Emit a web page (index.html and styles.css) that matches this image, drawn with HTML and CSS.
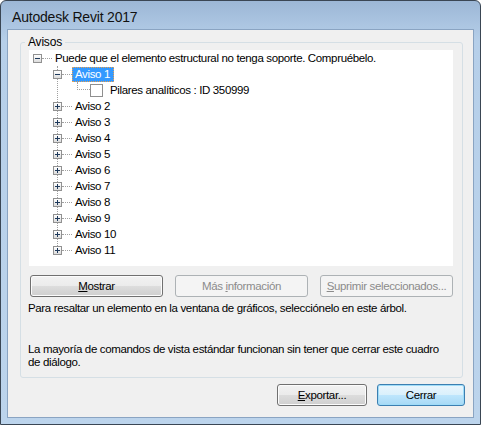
FILE: index.html
```html
<!DOCTYPE html>
<html lang="es">
<head>
  <meta charset="UTF-8">
  <title>Autodesk Revit 2017</title>
  <link rel="stylesheet" href="styles.css">
</head>
<body>
  <div class="window">
    <div class="titlebar">Autodesk Revit 2017</div>
    <div class="client">
      <fieldset class="group">
        <legend>Avisos</legend>
        <div class="tree">
          <div class="row">
            <span class="exp minus"></span><span class="dots"></span><span class="label">Puede que el elemento estructural no tenga soporte. Compruébelo.</span>
          </div>
          <ul class="branch">
            <li>
              <div class="row"><span class="exp minus"></span><span class="dots"></span><span class="label selected">Aviso 1</span></div>
              <div class="row leaf"><span class="elbow"></span><span class="check"></span><span class="label">Pilares analíticos : ID 350999</span></div>
            </li>
            <li class="row"><span class="exp"></span><span class="dots"></span><span class="label">Aviso 2</span></li>
            <li class="row"><span class="exp"></span><span class="dots"></span><span class="label">Aviso 3</span></li>
            <li class="row"><span class="exp"></span><span class="dots"></span><span class="label">Aviso 4</span></li>
            <li class="row"><span class="exp"></span><span class="dots"></span><span class="label">Aviso 5</span></li>
            <li class="row"><span class="exp"></span><span class="dots"></span><span class="label">Aviso 6</span></li>
            <li class="row"><span class="exp"></span><span class="dots"></span><span class="label">Aviso 7</span></li>
            <li class="row"><span class="exp"></span><span class="dots"></span><span class="label">Aviso 8</span></li>
            <li class="row"><span class="exp"></span><span class="dots"></span><span class="label">Aviso 9</span></li>
            <li class="row"><span class="exp"></span><span class="dots"></span><span class="label">Aviso 10</span></li>
            <li class="row last"><span class="exp"></span><span class="dots"></span><span class="label">Aviso 11</span></li>
          </ul>
        </div>

        <div class="actions">
          <button class="btn"><u>M</u>ostrar</button>
          <button class="btn" disabled>Más <u>i</u>nformación</button>
          <button class="btn" disabled><u>S</u>uprimir seleccionados...</button>
        </div>
        <p class="hint">Para resaltar un elemento en la ventana de gráficos, selecciónelo en este árbol.</p>
        <p class="note">La mayoría de comandos de vista estándar funcionan sin tener que cerrar este cuadro<br>de diálogo.</p>
      </fieldset>

      <div class="footer">
        <button class="btn export"><u>E</u>xportar...</button>
        <button class="btn default">Cerrar</button>
      </div>
    </div>
  </div>
</body>
</html>
```
FILE: styles.css
```css
/* Win7 style dialog */
body {
  margin: 0;
  background: #ffffff;
  font-family: "Liberation Sans", Arial, sans-serif;
  font-size: 11.5px;
  letter-spacing: -0.35px;
  color: #000000;
}

.window {
  width: 481px;
  height: 425px;
  box-sizing: border-box;
  border: 1px solid #3a4654;
  border-radius: 6px 6px 0 0;
  background: linear-gradient(#9cb7d6, #b6cfe9 40px, #bcd4ec);
  display: flex;
  flex-direction: column;
}

.titlebar {
  height: 28px;
  padding-left: 11px;
  line-height: 33px;
  font-size: 14px;
  letter-spacing: -0.2px;
  color: #111111;
}

.client {
  flex: 1;
  margin: 0 6px 6px 6px;
  border: 1px solid #8aa4c2;
  background: #f0f0f0;
  display: flex;
  flex-direction: column;
}

/* group box */
.group {
  margin: 5px 10px 0 12px;
  padding: 0 9px 0 8px;
  height: 343px;
  box-sizing: border-box;
  border: 1px solid #d5dfe5;
  border-radius: 3px;
}

.group legend {
  padding: 0 3px;
  margin-left: -4px;
  font-size: 12px;
  letter-spacing: -0.2px;
  line-height: 14px;
}

/* tree view */
.tree {
  height: 216px;
  margin-top: 1px;
  background: #ffffff;
  overflow: hidden;
}

.tree ul {
  list-style: none;
  margin: 0;
  padding: 0;
}

.row {
  display: flex;
  align-items: center;
  height: 16px;
  padding-left: 4px;
}

.exp {
  width: 9px;
  height: 9px;
  box-sizing: border-box;
  border: 1px solid #919191;
  background:
    linear-gradient(#1e395b, #1e395b) center / 5px 1px no-repeat,
    linear-gradient(#1e395b, #1e395b) center / 1px 5px no-repeat,
    linear-gradient(#ffffff, #dcdcdc);
  flex-shrink: 0;
}

.exp.minus {
  background:
    linear-gradient(#1e395b, #1e395b) center / 5px 1px no-repeat,
    linear-gradient(#ffffff, #dcdcdc);
}

.dots {
  width: 10px;
  border-top: 1px dotted #a0a0a0;
  flex-shrink: 0;
}

.label {
  padding: 0 3px;
  line-height: 14px;
  white-space: nowrap;
}

.label.selected {
  background: #3399ff;
  color: #ffffff;
  outline: 1px dotted #e8a050;
  outline-offset: -1px;
  padding: 0 4px 1px 3px;
}

.branch {
  display: flex;
  flex-direction: column;
  margin-left: 28px !important;
  border-left: 1px dotted #a0a0a0;
}

.branch .row {
  padding-left: 0;
}

.branch .exp {
  margin-left: -5px;
}

.branch .last {
  margin-bottom: -8px;
}

.leaf .elbow {
  align-self: flex-start;
  width: 13px;
  height: 8px;
  margin-left: 19px;
  box-sizing: border-box;
  border-left: 1px dotted #a0a0a0;
  border-bottom: 1px dotted #a0a0a0;
}

.check {
  width: 13px;
  height: 13px;
  box-sizing: border-box;
  border: 1px solid #8f8f8f;
  background: #ffffff;
  margin-right: 4px;
}

/* buttons */
.btn {
  height: 22px;
  padding: 0;
  font-family: inherit;
  font-size: 11.5px;
  letter-spacing: -0.35px;
  color: #000000;
  border: 1px solid #707070;
  border-radius: 3px;
  box-shadow: inset 0 0 0 1px #fcfcfc;
  background: linear-gradient(#f2f2f2, #ebebeb 50%, #dddddd 50%, #cfcfcf);
}

.btn u {
  text-decoration-thickness: 1px;
}

.btn:disabled {
  color: #8b8b8b;
  border-color: #adb2b5;
  background: #f4f4f4;
  box-shadow: none;
}

.actions {
  display: flex;
  gap: 12px;
  margin-top: 9px;
  padding-left: 1px;
}

.actions .btn {
  width: 133px;
}

.hint {
  margin: 4px 0 0 -1px;
  line-height: 14px;
}

.note {
  margin: 28px 0 0 -1px;
  line-height: 13px;
}

.footer {
  display: flex;
  justify-content: flex-end;
  gap: 10px;
  margin: 6px 8px 0 0;
}

.footer .export {
  width: 90px;
}

.footer .default {
  width: 88px;
  border-color: #3c7fb1;
  box-shadow: inset 0 0 0 1px #9fdcf8;
  background: linear-gradient(#eaf6fd, #d9f0fc 50%, #bee6fd 50%, #a7d9f5);
}
```
